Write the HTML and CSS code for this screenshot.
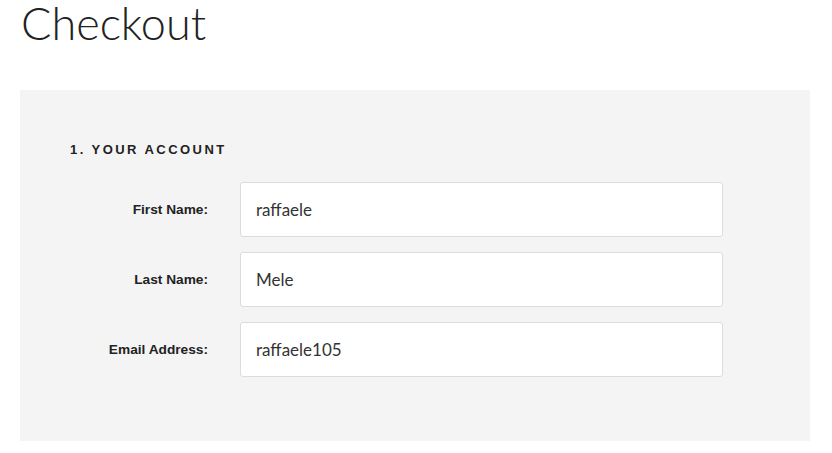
FILE: index.html
```html
<!DOCTYPE html>
<html>
<head>
<meta charset="utf-8">
<link rel="stylesheet" href="styles.css">
</head>
<body>
<h1 class="title">Checkout</h1>
<section class="panel">
  <h2 class="step">1. Your Account</h2>
  <div class="rows">
    <div class="row">
      <label class="label">First Name:</label>
      <div class="field">raffaele</div>
    </div>
    <div class="row">
      <label class="label">Last Name:</label>
      <div class="field">Mele</div>
    </div>
    <div class="row">
      <label class="label">Email Address:</label>
      <div class="field">raffaele105</div>
    </div>
  </div>
</section>
</body>
</html>
```
FILE: styles.css
```css
html, body {
  margin: 0;
  padding: 0;
  background: #ffffff;
}
body {
  padding: 0 22px 0 20px;
  font-family: Lato, "Liberation Sans", sans-serif;
  color: #222;
}
.title {
  margin: 0;
  padding: 0 0 0 1px;
  font-family: Lato, sans-serif;
  font-weight: 300;
  font-size: 45px;
  line-height: 47px;
  color: #222;
  height: 90px;
  box-sizing: border-box;
}
.panel {
  width: 790px;
  height: 351px;
  box-sizing: border-box;
  background: #f4f4f4;
  padding: 52px 0 0 50px;
}
.step {
  margin: 0;
  font-family: "Liberation Sans", Arial, sans-serif;
  font-weight: 700;
  font-size: 13px;
  line-height: 16px;
  letter-spacing: 2.45px;
  text-transform: uppercase;
  color: #222;
}
.rows {
  margin-top: 24px;
  display: flex;
  flex-direction: column;
  gap: 15px;
}
.row {
  display: flex;
  align-items: center;
  gap: 32px;
}
.label {
  width: 138px;
  text-align: right;
  font-family: "Liberation Sans", Arial, sans-serif;
  font-weight: 700;
  font-size: 13.7px;
  color: #222;
}
.field {
  width: 483px;
  height: 55px;
  box-sizing: border-box;
  background: #fff;
  border: 1px solid #dcdcdc;
  border-radius: 3px;
  padding: 0 15px;
  display: flex;
  align-items: center;
  font-family: Lato, "Liberation Sans", sans-serif;
  font-size: 17px;
  color: #333;
}
```
